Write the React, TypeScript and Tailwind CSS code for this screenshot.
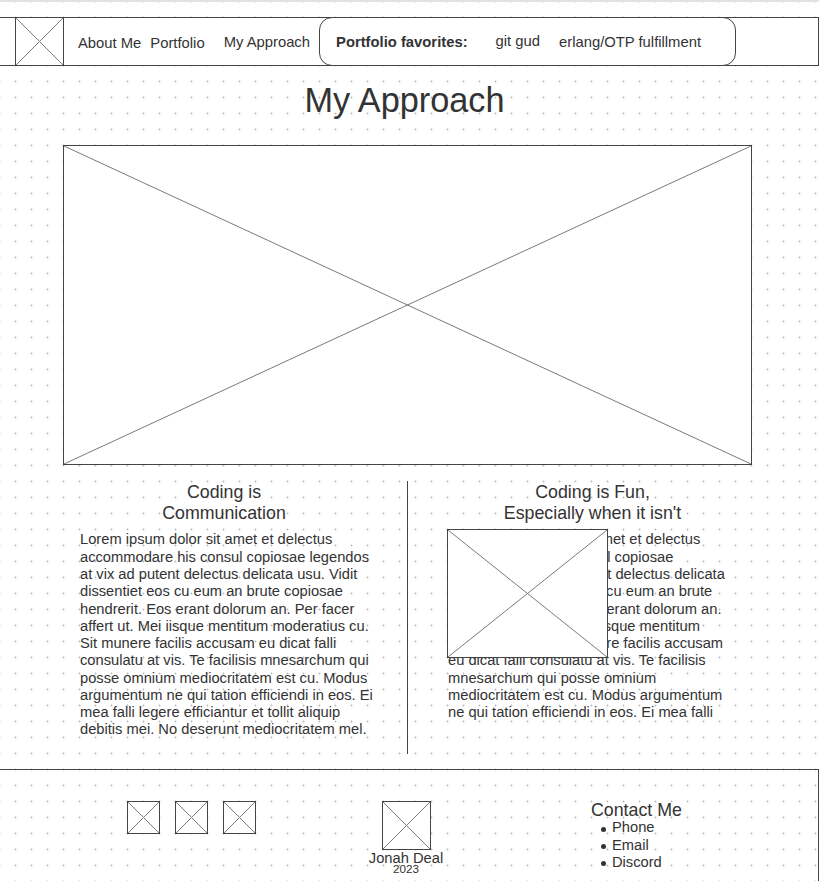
import React from 'react';

const lorem =
  'Lorem ipsum dolor sit amet et delectus accommodare his consul copiosae legendos at vix ad putent delectus delicata usu. Vidit dissentiet eos cu eum an brute copiosae hendrerit. Eos erant dolorum an. Per facer affert ut. Mei iisque mentitum moderatius cu. Sit munere facilis accusam eu dicat falli consulatu at vis. Te facilisis mnesarchum qui posse omnium mediocritatem est cu. Modus argumentum ne qui tation efficiendi in eos. Ei mea falli legere efficiantur et tollit aliquip debitis mei. No deserunt mediocritatem mel.';

// Wireframe image placeholder: a box with an X across it
const Cross = () => (
  <svg className="absolute inset-0 h-full w-full" viewBox="0 0 100 100" preserveAspectRatio="none">
    <line x1="0" y1="0" x2="100" y2="100" stroke="#7a7a7a" strokeWidth="1" vectorEffect="non-scaling-stroke" />
    <line x1="100" y1="0" x2="0" y2="100" stroke="#7a7a7a" strokeWidth="1" vectorEffect="non-scaling-stroke" />
  </svg>
);

const Placeholder = ({ className = '' }: { className?: string }) => (
  <div className={`shrink-0 border border-[#444] bg-white ${className}`}>
    <Cross />
  </div>
);

const Nav = () => (
  <nav className="mt-[15px] flex h-[49px] items-stretch border-y border-r border-[#444] bg-white text-[14.8px] text-[#333]">
    <div className="relative ml-[15px] w-[49px] border-x border-[#444]">
      <Cross />
    </div>
    <a className="ml-[14px] self-center pt-[4px]">About Me</a>
    <a className="ml-[9px] self-center pt-[4px]">Portfolio</a>
    <a className="ml-[19px] self-center pt-[2px]">My Approach</a>
    <div className="-my-px ml-[9px] flex w-[417px] items-center rounded-[13px] border border-[#444] pl-[16px]">
      <span className="pt-[2px] font-bold">Portfolio favorites:</span>
      <a className="ml-[28px]">git gud</a>
      <a className="ml-[19px] pt-[2px]">erlang/OTP fulfillment</a>
    </div>
  </nav>
);

const Column = ({ title, children }: { title: React.ReactNode; children: React.ReactNode }) => (
  <div className="flex flex-col">
    <h3 className="pt-[1px] text-center text-[17.8px] leading-[21px]">{title}</h3>
    {children}
  </div>
);

export default function App() {
  return (
    <div className="min-h-[881px] bg-white bg-[radial-gradient(circle_at_8.5px_8.5px,#bdbdbd_0.9px,transparent_1.1px)] bg-[length:16px_16px] bg-[position:7px_9px] font-['Liberation_Sans',Arial,sans-serif] text-[#333]">
      <div className="h-[2px] bg-[#e2e2e2]" />
      <Nav />

      <h1 className="mt-[15px] pr-[10px] text-center text-[34.3px] leading-[1.15] font-normal">My Approach</h1>

      <Placeholder className="relative mt-[25px] ml-[63px] h-[320px] w-[689px]" />

      <section className="mt-[16px] ml-[63px] flex h-[273px]">
        <div className="w-[322px]">
          <Column title={<>Coding is<br />Communication</>}>
            <p className="mt-[7px] ml-[17px] w-[300px] text-[14.7px] leading-[17.27px]">{lorem}</p>
          </Column>
        </div>
        <div className="ml-[22px] w-px bg-[#444]" />
        <div className="w-[369px]">
          <Column title={<>Coding is Fun,<br />Especially when it isn't</>}>
            <div className="relative mt-[7px] ml-[40px] w-[283px]">
              <div className="h-[190px] overflow-hidden">
                <p className="text-[14.7px] leading-[17.27px]">{lorem}</p>
              </div>
              <Placeholder className="absolute top-[-2px] left-[-1px] h-[129px] w-[161px]" />
            </div>
          </Column>
        </div>
      </section>

      <footer className="mt-[15px] flex h-[112px] items-start border-t border-r border-[#444] pt-[31px]">
        <div className="ml-[127px] flex gap-[15px]">
          <Placeholder className="relative h-[33px] w-[33px]" />
          <Placeholder className="relative h-[33px] w-[33px]" />
          <Placeholder className="relative h-[33px] w-[33px]" />
        </div>
        <div className="ml-[100px] flex w-[100px] flex-col items-center">
          <Placeholder className="relative h-[49px] w-[49px]" />
          <span className="text-[14.7px] leading-[16px]">Jonah Deal</span>
          <span className="text-[11.7px] leading-[6px]">2023</span>
        </div>
        <div className="ml-[135px] flex flex-col">
          <h3 className="text-[17.8px] leading-[18px]">Contact Me</h3>
          <ul className="text-[14.7px] leading-[17.2px]">
            {['Phone', 'Email', 'Discord'].map((item) => (
              <li key={item} className="flex items-center">
                <span className="ml-[10px] mr-[6px] mt-[2px] h-[5px] w-[5px] rounded-full bg-[#333]" />
                {item}
              </li>
            ))}
          </ul>
        </div>
      </footer>
    </div>
  );
}
